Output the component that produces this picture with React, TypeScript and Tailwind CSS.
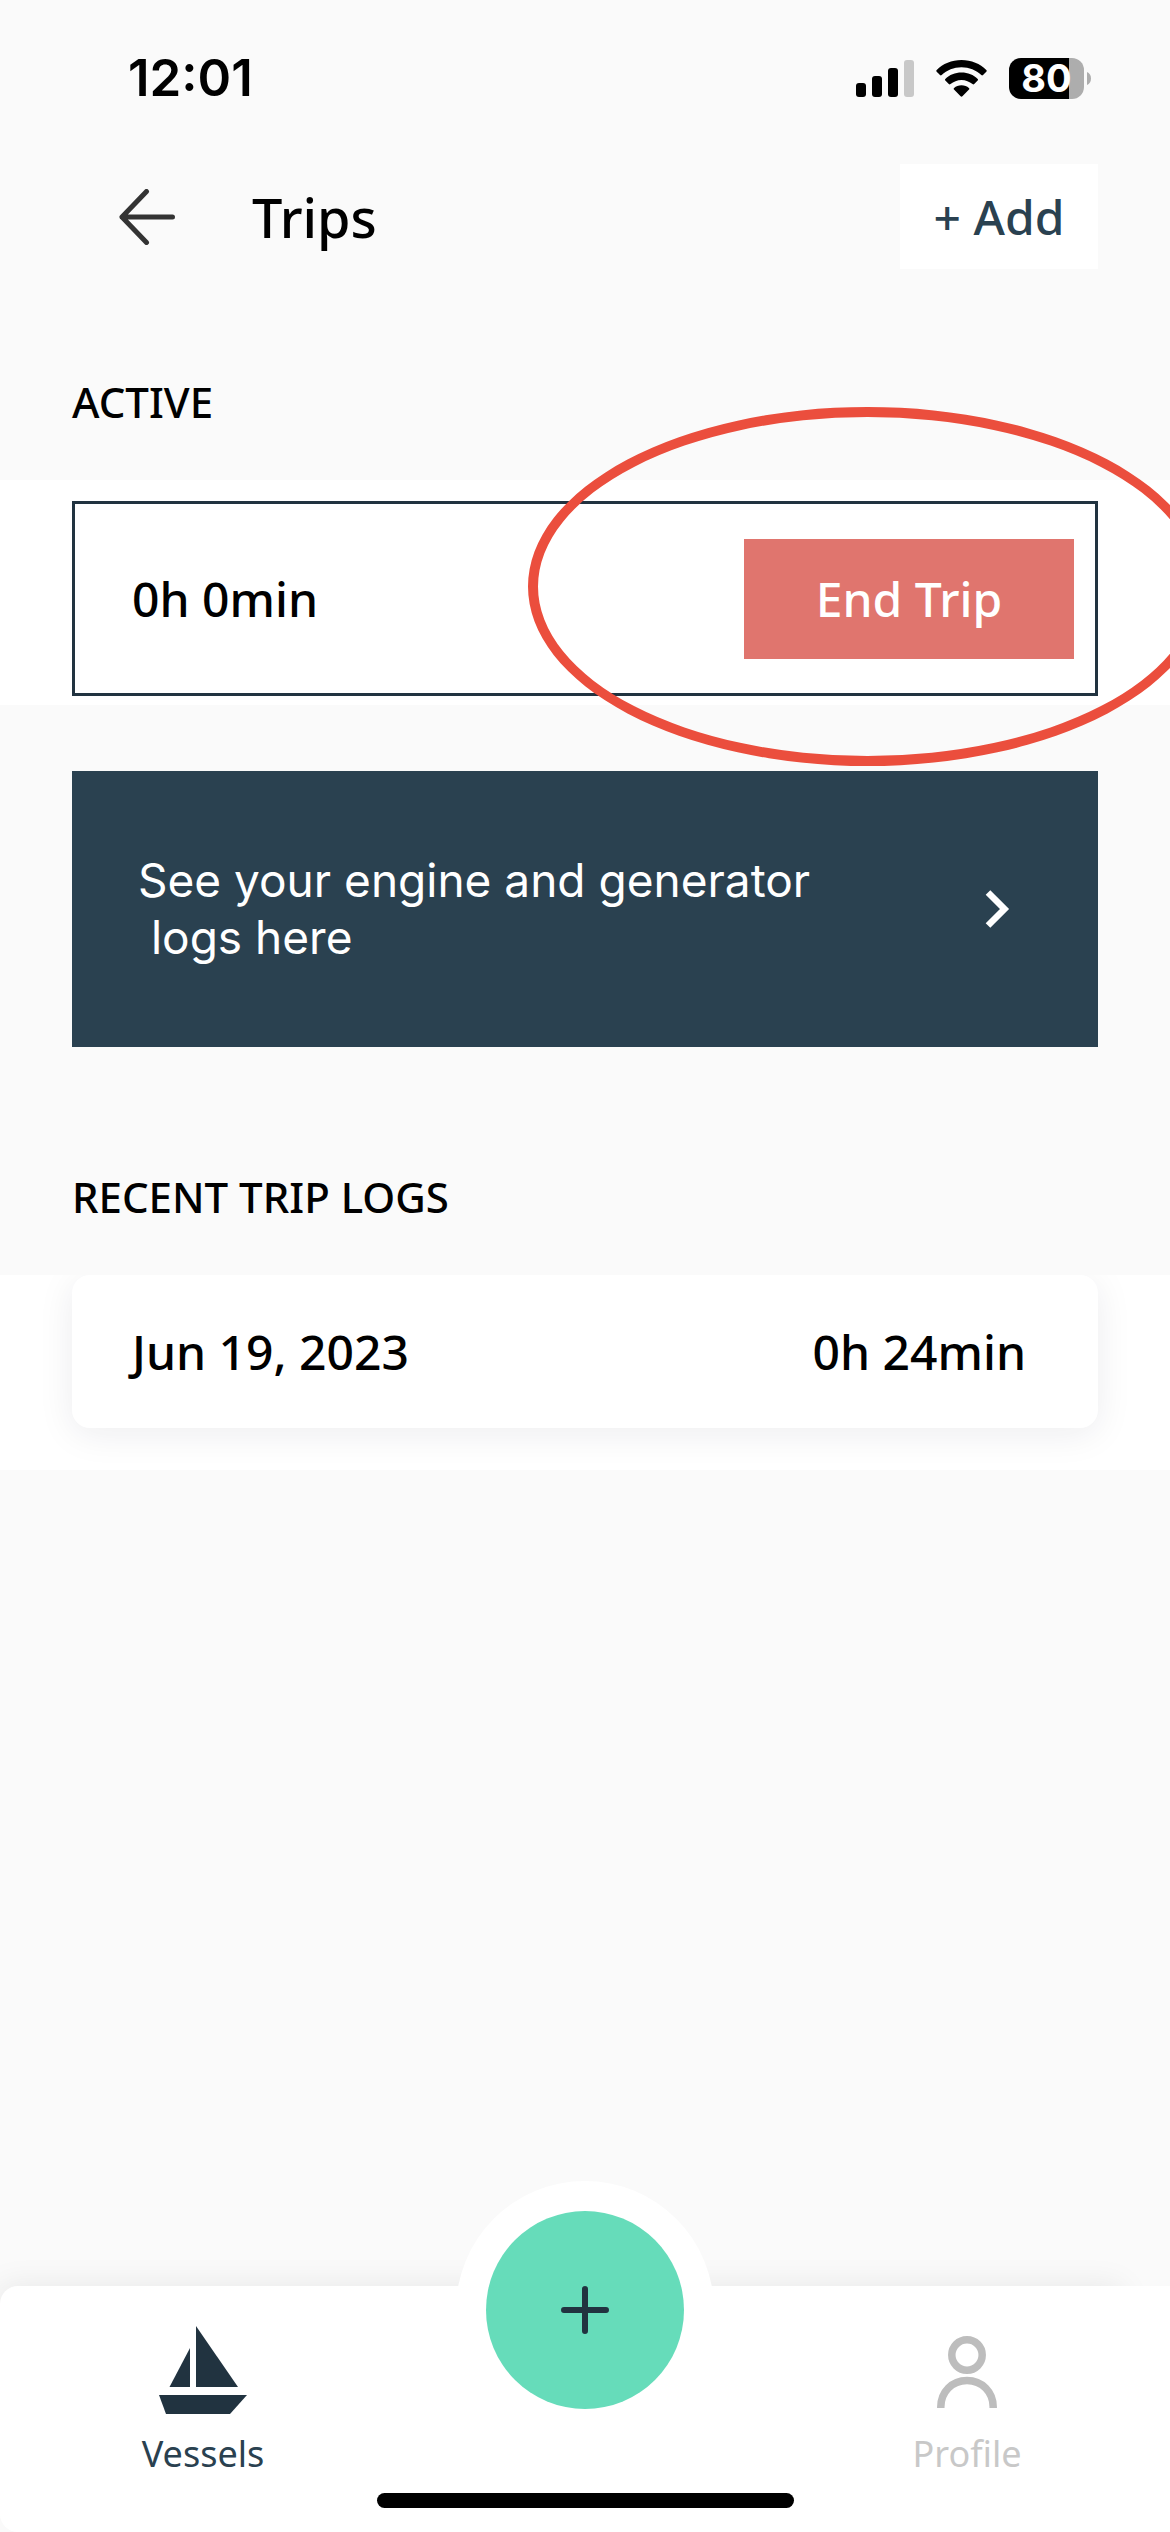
const trips = [{ date: 'Jun 19, 2023', duration: '0h 24min' }];

const StatusBar = () => (
  <div className="flex h-[156px] items-center justify-between pl-32 pr-[79px] font-['Inter',sans-serif]">
    <span className="text-[51px] font-semibold text-black">12:01</span>
    <div className="flex items-center">
      <svg width="58" height="37" viewBox="0 0 58 37" aria-hidden="true">
        <rect x="0" y="23" width="10" height="14" rx="3" />
        <rect x="16" y="16" width="10" height="21" rx="3" />
        <rect x="32" y="8" width="10" height="29" rx="3" />
        <rect x="48" y="0" width="10" height="37" rx="3" fill="#c8c8c8" />
      </svg>
      <svg
        className="ml-[22px]"
        width="51"
        height="37"
        viewBox="0 0 51 37"
        aria-hidden="true"
      >
        <path d="M25.5 0C35.3 0 44.2 3.8 50.3 9.9Q51.2 10.8 50.3 11.7L47 15Q46.200 15.8 45.3 15C40.1 10.1 33.2 7.2 25.5 7.2S10.9 10.1 5.7 15Q4.800 15.8 4 15L.7 11.7Q-.2 10.8.7 9.9C6.800 3.8 15.700 0 25.5 0Z" />
        <path d="M25.5 12.6C31.9 12.6 37.6 15 41.7 18.9Q42.5 19.8 41.7 20.6L38.2 24.1Q37.4 24.900 36.5 24.1C33.5 21.5 29.7 19.9 25.5 19.9S17.5 21.5 14.5 24.1Q13.6 24.9 12.8 24.1L9.3 20.6Q8.5 19.8 9.3 18.9C13.4 15 19.1 12.6 25.5 12.6Z" />
        <path d="M25.5 25.2C28.4 25.2 31 26.2 32.9 27.9Q33.8 28.7 33 29.5L26.4 36.3Q25.5 37.2 24.6 36.3L18 29.5Q17.2 28.7 18.1 27.9C20 26.2 22.6 25.2 25.5 25.2Z" />
      </svg>
      <div className="ml-[22px] flex items-center gap-[3px]">
        <div className="flex h-[41px] w-[75px] items-center justify-center rounded-xl bg-linear-to-r from-black from-80% to-[#adadad] to-80% text-[38px] leading-none font-bold text-white">
          80
        </div>
        <svg width="4" height="13" viewBox="0 0 4 13" aria-hidden="true">
          <path d="M0 0C2.5 1 4 3.5 4 6.5S2.5 12 0 13Z" fill="#adadad" />
        </svg>
      </div>
    </div>
  </div>
);

const BackIcon = () => (
  <svg
    width="56"
    height="56"
    viewBox="0 0 56 56"
    fill="none"
    stroke="#333"
    strokeWidth="5"
    strokeLinecap="round"
    strokeLinejoin="round"
    aria-hidden="true"
  >
    <path d="M53.5 28H3M27.5 2.500L3 28L27.5 53.5" />
  </svg>
);

const BoatIcon = () => (
  <svg width="88" height="88" viewBox="0 0 88 88" fill="#213340" aria-hidden="true">
    <path d="M37 0L79 61H37Z" />
    <path d="M31 22V61H10.5Z" />
    <path d="M0 69H88L71 88H7Z" />
  </svg>
);

const ProfileIcon = () => (
  <svg
    width="88"
    height="88"
    viewBox="0 0 88 88"
    fill="none"
    stroke="#bdbdbd"
    strokeWidth="7.5"
    aria-hidden="true"
  >
    <circle cx="44" cy="29" r="15.2" />
    <path d="M17.8 82V81C17.8 66 29 54.5 44 54.5S70.2 66 70.2 81V82" />
  </svg>
);

const SectionTitle = ({ children }: { children: string }) => (
  <h2 className="mb-[50px] px-[72px] text-[42px] leading-[56px] font-medium text-black">
    {children}
  </h2>
);

function App() {
  return (
    <div className="flex min-h-screen flex-col overflow-x-hidden bg-[#fafafa] font-['Noto_Sans',sans-serif] text-black">
      <StatusBar />

      <header className="flex items-center pt-2 pr-[72px] pl-[119px]">
        <button type="button" aria-label="Back" className="cursor-pointer">
          <BackIcon />
        </button>
        <h1 className="ml-[77px] text-[54px] leading-none font-medium">Trips</h1>
        <button
          type="button"
          className="ml-auto h-[105px] w-[198px] cursor-pointer bg-white text-[48px] leading-none font-medium text-[#2a4150]"
        >
          + Add
        </button>
      </header>

      <main className="flex-1">
        <section className="mt-[105px]">
          <SectionTitle>ACTIVE</SectionTitle>
          <div className="relative bg-white px-[72px] pt-[21px] pb-[9px]">
            <div className="flex h-[195px] items-center justify-between border-3 border-[#213340] pr-[21px] pl-[57px]">
              <span className="text-[48px] font-medium">0h 0min</span>
              <button
                type="button"
                className="h-[120px] w-[330px] cursor-pointer bg-[#e0756e] text-[48px] leading-none font-medium text-white"
              >
                End Trip
              </button>
            </div>
            {/* highlight ring around the end trip button */}
            <div className="pointer-events-none absolute -top-[73px] -right-[37px] h-[359px] w-[679px] rounded-[50%] border-10 border-[#eb4e3d]" />
          </div>
        </section>

        <a
          href="#logs"
          className="mx-[72px] mt-[66px] flex h-[276px] items-center justify-between bg-[#2a4150] pr-[87px] pl-[66px] text-white"
        >
          <span className="font-['Inter',sans-serif] text-[46px] leading-[57px] whitespace-pre">
            {'See your engine and generator\n logs here'}
          </span>
          <svg
            width="27"
            height="38"
            viewBox="0 0 27 38"
            fill="none"
            stroke="currentColor"
            strokeWidth="6.5"
            aria-hidden="true"
          >
            <path d="M4 2.5L20.5 19L4 35.5" />
          </svg>
        </a>

        <section className="mt-[122px]">
          <SectionTitle>RECENT TRIP LOGS</SectionTitle>
          <ul className="overflow-hidden bg-white px-[72px] pb-[42px]">
            {trips.map((trip) => (
              <li
                key={trip.date}
                className="flex h-[153px] items-center justify-between rounded-[18px] bg-white pr-[72px] pl-[60px] text-[48px] font-medium shadow-[0_6px_36px_rgba(20,20,50,0.08)]"
              >
                <span>{trip.date}</span>
                <span>{trip.duration}</span>
              </li>
            ))}
          </ul>
        </section>
      </main>

      <nav className="rounded-l-[18px] bg-white px-3 pb-6 shadow-[-24px_-24px_30px_-24px_rgba(0,0,0,0.08)]">
        <div className="grid h-48 grid-cols-3 justify-items-center">
          <a
            href="#vessels"
            className="flex flex-col items-center gap-4 pt-10 text-[36px] leading-[48px] text-[#2a4150]"
          >
            <BoatIcon />
            Vessels
          </a>
          <button
            type="button"
            aria-label="New trip"
            className="-mt-[75px] flex size-[198px] cursor-pointer items-center justify-center rounded-full bg-[#66dcba] ring-30 ring-white"
          >
            <svg
              width="48"
              height="48"
              viewBox="0 0 48 48"
              stroke="#213340"
              strokeWidth="6"
              strokeLinecap="round"
              aria-hidden="true"
            >
              <path d="M24 3V45M3 24H45" />
            </svg>
          </button>
          <a
            href="#profile"
            className="flex flex-col items-center gap-4 pt-10 text-[36px] leading-[48px] text-[#c8c8c8]"
          >
            <ProfileIcon />
            Profile
          </a>
        </div>
        <div className="mx-auto mt-[15px] h-[15px] w-[417px] rounded-full bg-black" />
      </nav>
    </div>
  );
}

export default App;
